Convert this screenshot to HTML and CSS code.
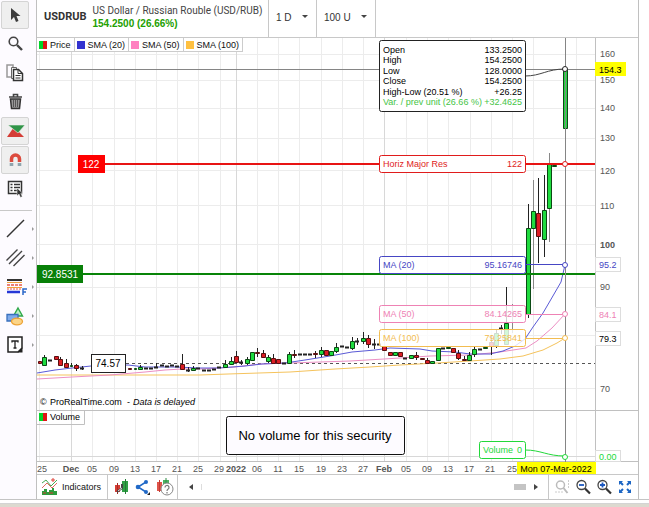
FILE: index.html
```html
<!DOCTYPE html>
<html lang="en">
<head>
    <meta charset="UTF-8">
    <meta name="viewport" content="width=device-width, initial-scale=1.0">
    <title>USDRUB - ProRealTime</title>
    <link rel="stylesheet" href="styles.css">
</head>
<body>
    <div class="app">
        <nav class="tools" aria-label="Drawing tools">
            <button class="tool active" type="button" aria-label="Select">
                <svg width="20" height="20" viewBox="0 0 20 20"><path d="M6 3v12l3-3 2 5 2.500-1-2-5h4z" fill="#3c3c3c"/></svg>
            </button>
            <button class="tool" type="button" aria-label="Zoom">
                <svg width="20" height="20" viewBox="0 0 20 20"><circle cx="8.500" cy="7.500" r="4.300" fill="none" stroke="#444" stroke-width="1.600"/><path d="M12 11l5 5" stroke="#444" stroke-width="2.400"/></svg>
            </button>
            <button class="tool" type="button" aria-label="Copy">
                <svg width="20" height="20" viewBox="0 0 20 20"><path d="M8 4V2H2v12h4" fill="none" stroke="#999" stroke-width="1.500"/><path d="M6.500 4.500h5v11h-5z" fill="#fff" stroke="#666"/><path d="M8.500 6.500h5l4 4v7h-9z" fill="#fff" stroke="#333" stroke-width="1.500"/><path d="M13 6.500v4h4M10.500 12.500h5M10.500 15h5" fill="none" stroke="#333"/></svg>
            </button>
            <button class="tool" type="button" aria-label="Delete">
                <svg width="20" height="20" viewBox="0 0 20 20"><path d="M4 5h13M8.500 4.500v-2h4v2" fill="none" stroke="#444" stroke-width="1.600"/><path d="M5.500 7h10l-1 9.500h-8z" fill="#999" stroke="#333" stroke-width="1.500"/><path d="M8.500 8v7M10.500 8v7M12.500 8v7" stroke="#555"/></svg>
            </button>
            <button class="tool active" type="button" aria-label="Buy and sell signals">
                <svg width="20" height="20" viewBox="0 0 20 20"><path d="M2 16h17L9 6z" fill="#d43d36"/><path d="M3 4h17l-7 8z" fill="#2f9447" stroke="#efefef" stroke-width=".6"/></svg>
            </button>
            <button class="tool active" type="button" aria-label="Magnet">
                <svg width="20" height="20" viewBox="0 0 20 20"><path d="M6.500 12V9a4 4 0 0 1 8 0v3" fill="none" stroke="#dc4b3e" stroke-width="3.500"/><path d="M4.700 13h3.600v3H4.700zM12.700 13h3.600v3h-3.600z" fill="#8fa4ad"/></svg>
            </button>
            <button class="tool" type="button" aria-label="Object list">
                <svg width="20" height="20" viewBox="0 0 20 20"><path d="M3.500 2.500h13v12h-13z" fill="#fff" stroke="#333" stroke-width="1.500"/><path d="M5.500 5.500h2M9 5.500h6M5.500 8.500h2M9 8.500h6M5.500 11.500h2M9 11.500h4" stroke="#333" stroke-width="1.500"/><path d="M12 9v8l2-2 1.500 3.500 1.800-1-1.500-3H18z" fill="#333" stroke="#fff" stroke-width=".5"/></svg>
            </button>
            <hr class="tools-line">
            <button class="tool flyout" type="button" aria-label="Line">
                <svg width="20" height="20" viewBox="0 0 20 20"><path d="M2 18L19 1" stroke="#333" stroke-width="1.500"/></svg>
            </button>
            <button class="tool flyout" type="button" aria-label="Parallel lines">
                <svg width="20" height="20" viewBox="0 0 20 20"><path d="M1.500 12.500L12.500 1.500M4 16L17 3M8.500 18l11-11" stroke="#444" stroke-width="1.400"/></svg>
            </button>
            <button class="tool flyout" type="button" aria-label="Fibonacci">
                <svg width="20" height="20" viewBox="0 0 20 20"><path d="M2 3h15" stroke="#333" stroke-width="2"/><path d="M2 5.500h15M2 10.500h15" stroke="#f0a13b"/><path d="M2 8h15" stroke="#e8574c" stroke-width="1.500" stroke-dasharray="3 1"/><path d="M2 12h15" stroke="#e8574c" stroke-dasharray="2 1"/><path d="M2 15h13" stroke="#2637d6" stroke-width="2.500"/><path d="M18 18v-6h4M18 15h3" fill="none" stroke="#2b68c9" stroke-width="1.500"/></svg>
            </button>
            <button class="tool flyout" type="button" aria-label="Shapes">
                <svg width="20" height="20" viewBox="0 0 20 20"><path d="M13 2l4.500 8h-9z" fill="#b8efc2" stroke="#2fa84a" stroke-width="1.400"/><path d="M2 8.500h11v6.500H2z" fill="#7fabeb" stroke="#3970bd" stroke-width="1.300"/><ellipse cx="12" cy="15.500" rx="5.500" ry="3.300" fill="#fbd488" stroke="#eda234" stroke-width="1.300"/></svg>
            </button>
            <button class="tool flyout" type="button" aria-label="Text">
                <svg width="20" height="20" viewBox="0 0 20 20"><path d="M3 2h14v11l-4 4H3z" fill="#fff" stroke="#222" stroke-width="1.500"/><path d="M17.500 12.500v5h-5z" fill="#222"/><path d="M7 7.500V6h6v1.500M10 6v7M8.500 13h3" fill="none" stroke="#222" stroke-width="1.300"/></svg>
            </button>
        </nav>

        <main class="main">
            <header class="header">
                <div class="security">
                    <h1 class="ticker">USDRUB</h1>
                    <div>
                        <div class="name">US Dollar / Russian Rouble (USD/RUB)</div>
                        <div class="quote">154.2500 (26.66%)</div>
                    </div>
                </div>
                <div class="picker">
                    <select class="timeframe" aria-label="Timeframe"><option>1 D</option></select>
                </div>
                <div class="picker">
                    <select class="units" aria-label="Units displayed"><option>100 U</option></select>
                </div>
            </header>

            <section class="chart">
                <ul class="legend">
                    <li><i class="swatch price"></i>Price</li>
                    <li><i class="swatch sma20"></i>SMA (20)</li>
                    <li><i class="swatch sma50"></i>SMA (50)</li>
                    <li><i class="swatch sma100"></i>SMA (100)</li>
                </ul>

                <svg class="plot" viewBox="37 38 601 436" role="img" aria-label="USDRUB daily price chart">
                    <!-- grid -->
                    <path class="grid" d="M39.500 38v424M92.500 38v424M114.500 38v424M135.500 38v424M156.500 38v424M177.500 38v424M198.500 38v424M220.500 38v424M257.500 38v424M278.500 38v424M299.500 38v424M321.500 38v424M342.500 38v424M363.500 38v424M406.500 38v424M427.500 38v424M448.500 38v424M470.500 38v424M491.500 38v424M512.500 38v424M533.500 38v424M576.500 38v424"/>
                    <path class="grid" d="M37 54.500h558M37 80.500h558M37 108.500h558M37 138.500h558M37 170.500h558M37 205.500h558M37 244.500h558M37 287.500h558M37 335.500h558M37 388.500h558"/>
                    <path class="grid-month" d="M71.500 38v424M236.500 38v424M384.500 38v424M37 456.500h558"/>
                    <path class="frame" d="M37 410.500h601M37 461.500h601M595.500 38v424"/>

                    <!-- levels -->
                    <path class="cross" d="M37 69.500h558"/>
                    <path class="dash" d="M126 363.500h469"/>

                    <!-- averages -->
                    <polyline class="ma ma100" points="37,375 200,375 228,374 290,372 335,369 370,367 400,365 437,363 470,361 500,359 523,356 543,350 557,343 565,338"/>
                    <polyline class="ma ma50" points="37,379 72,377 110,375 145,372 165,370 182,369 200,369 235,367 260,364 320,362 350,361 384,359 400,358 430,356 470,355 500,352 526,348 537,341 552,328 565,314"/>
                    <polyline class="ma ma20" points="37,373 55,370 72,368 91,366 128,365 145,367 177,367 198,368 219,368 245,366 262,364 285,363 305,360 330,356 352,352 375,350 390,348 420,349 432,351 455,352 470,354 490,354 503,351 515,346 525,339 533,327 543,313 550,301 561,282 565,265"/>

                    <!-- candles -->
                    <path class="wick" d="M44.500 355v10M60.500 357v9M66.500 359v8M71.500 363v4M76.500 364v7M82.500 366v4M140.500 365v5M156.500 363v5M182.500 354v16M188.500 367v5M193.500 366v5M225.500 360v8M231.500 357v8M236.500 351v12M241.500 360v5M247.500 357v8M257.500 348v9M263.500 350v8M268.500 355v8M273.500 354v10M289.500 352v12M294.500 350v8M315.500 351v7M321.500 347v10M336.500 343v10M352.500 337v13M357.500 338v7M363.500 332v12M368.500 335v13M374.500 339v10M416.500 352v8M427.500 358v6M458.500 350v10M464.500 356v5M469.500 352v9M474.500 347v10M491.500 335v20M496.500 330v18M501.500 325v9M506.500 287v47M528.500 204v114M538.500 178v85M544.500 175v82"/>
                    <path class="wick soft" d="M512.500 304v29M533.500 180v109M549.500 153v89M565.500 128v16"/>
                    <path class="doji" d="M48 360.500h4M80 368.500h4M144 368.500h4M149 368.500h4M154 367.500h4M160 365.500h4M165 366.500h4M170 365.500h4M175 366.500h4M186 370.500h4M196 368.500h4M202 370.500h4M207 370.500h4M212 369.500h4M217 367.500h4M239 362.500h4M282 363.500h4M298 354.500h4M303 354.500h4M308 354.500h4M340 346.500h4M345 347.500h4M355 341.500h4M372 344.500h4M377 344.500h4M403 358.500h4M441 348.500h4M478 349.500h4M499 328.500h4"/>
                    <path class="up" d="M42.500 357.500h4v8h-4zM70.500 365.500h2v1h-2zM134.500 368.500h2v1h-2zM138.500 367.500h4v2h-4zM191.500 368.500h4v2h-4zM223.500 364.500h4v3h-4zM229.500 361.500h4v3h-4zM245.500 359.500h4v4h-4zM250.500 352.500h4v8h-4zM266.500 357.500h4v4h-4zM287.500 354.500h4v9h-4zM319.500 350.500h4v4h-4zM329.500 351.500h4v4h-4zM334.500 347.500h4v4h-4zM350.500 341.500h4v7h-4zM361.500 338.500h4v3h-4zM393.500 352.500h4v3h-4zM409.500 355.500h4v3h-4zM430.500 361.500h4v2h-4zM436.500 348.500h4v12h-4zM446.500 347.500h4v1h-4zM467.500 355.500h4v5h-4zM472.500 349.500h4v5h-4zM483.500 347.500h4v1h-4zM494.500 333.500h4v12h-4zM504.500 323.500h4v21h-4zM526.500 228.500h4v86h-4zM531.500 211.500h4v17h-4zM542.500 210.500h4v29h-4zM547.500 164.500h4v44h-4zM552.500 165.500h4v1h-4zM563.500 69.500h4v59h-4z"/>
                    <path class="down" d="M38.500 361.500h3v2h-3zM54.500 356.500h4v3h-4zM58.500 359.500h4v6h-4zM64.500 363.500h4v4h-4zM74.500 365.500h4v3h-4zM128.500 368.500h3v1h-3zM180.500 364.500h4v5h-4zM234.500 356.500h4v6h-4zM255.500 352.500h4v1h-4zM261.500 353.500h4v4h-4zM271.500 358.500h4v5h-4zM276.500 359.500h4v4h-4zM292.500 354.500h4v1h-4zM313.500 353.500h4v1h-4zM324.500 350.500h4v5h-4zM366.500 338.500h4v6h-4zM382.500 346.500h4v4h-4zM388.500 352.500h4v3h-4zM398.500 352.500h4v4h-4zM414.500 355.500h4v2h-4zM420.500 358.500h4v1h-4zM425.500 360.500h4v3h-4zM451.500 348.500h4v4h-4zM456.500 353.500h4v5h-4zM462.500 359.500h4v1h-4zM489.500 342.500h4v4h-4zM536.500 213.500h4v23h-4z"/>

                    <!-- horizontal lines with their tags -->
                    <path class="resistance" d="M104 164h491"/>
                    <path class="support" d="M83 274h512"/>
                    <rect class="tag-red" x="78" y="155" width="27" height="18"/>
                    <text class="tag-text white" x="91" y="168" text-anchor="middle">122</text>
                    <rect class="tag-green" x="37" y="265" width="46" height="18"/>
                    <text class="tag-text white" x="60" y="278" text-anchor="middle">92.8531</text>
                    <rect class="tag-plain" x="91.500" y="354.500" width="34" height="18"/>
                    <text class="tag-text" x="108" y="367" text-anchor="middle">74.57</text>

                    <!-- cursor and value boxes -->
                    <path class="cross" d="M565.500 38v424"/>
                    <path class="link" d="M525 76c16 0 22-7 40-7"/>
                    <path class="link blue" d="M525 264.500h40"/>
                    <path class="link pink" d="M525 314.500h40"/>
                    <path class="link orange" d="M525 338.500h40"/>
                    <path class="link green" d="M525 450c16 0 22 6 40 6"/>
                    <circle class="dot" cx="565" cy="69" r="2.500"/>
                    <circle class="dot red" cx="565" cy="164" r="2.500"/>
                    <circle class="dot blue" cx="565" cy="265" r="2.500"/>
                    <circle class="dot pink" cx="565" cy="314" r="2.500"/>
                    <circle class="dot orange" cx="565" cy="338" r="2.500"/>
                    <circle class="dot green" cx="565" cy="457" r="2.500"/>

                    <rect class="box" x="379.500" y="40.500" width="146" height="71" rx="2"/>
                    <g class="values">
                        <text x="383" y="53">Open</text><text x="522" y="53" text-anchor="end">133.2500</text>
                        <text x="383" y="63">High</text><text x="522" y="63" text-anchor="end">154.2500</text>
                        <text x="383" y="74">Low</text><text x="522" y="74" text-anchor="end">128.0000</text>
                        <text x="383" y="84">Close</text><text x="522" y="84" text-anchor="end">154.2500</text>
                        <text x="383" y="95">High-Low (20.51 %)</text><text x="522" y="95" text-anchor="end">+26.25</text>
                        <text class="gain" x="383" y="105">Var. / prev unit (26.66 %)</text><text class="gain" x="522" y="105" text-anchor="end">+32.4625</text>
                    </g>
                    <g class="red">
                        <rect class="box" x="379.500" y="155.500" width="146" height="17" rx="2"/>
                        <text x="383" y="167">Horiz Major Res</text><text x="522" y="167" text-anchor="end">122</text>
                    </g>
                    <g class="blue">
                        <rect class="box clear" x="379.500" y="256.500" width="146" height="17" rx="2"/>
                        <text x="383" y="268">MA (20)</text><text x="522" y="268" text-anchor="end">95.16746</text>
                    </g>
                    <g class="pink">
                        <rect class="box clear" x="379.500" y="305.500" width="146" height="17" rx="2"/>
                        <text x="383" y="317">MA (50)</text><text x="522" y="317" text-anchor="end">84.14265</text>
                    </g>
                    <g class="orange">
                        <rect class="box clear" x="379.500" y="329.500" width="146" height="17" rx="2"/>
                        <text x="383" y="341">MA (100)</text><text x="522" y="341" text-anchor="end">79.25841</text>
                    </g>
                    <g class="green">
                        <rect class="box" x="479.500" y="441.500" width="46" height="17" rx="2"/>
                        <text x="483" y="453">Volume</text><text x="522" y="453" text-anchor="end">0</text>
                    </g>

                    <!-- price axis -->
                    <g class="axis">
                        <text x="600" y="57">160</text>
                        <text x="600" y="83">150</text>
                        <text x="600" y="111">140</text>
                        <text x="600" y="141">130</text>
                        <text x="600" y="174">120</text>
                        <text x="600" y="209">110</text>
                        <text class="bold" x="600" y="248">100</text>
                        <text x="600" y="290">90</text>
                        <text x="600" y="392">70</text>
                    </g>
                    <rect class="now" x="595" y="62" width="31" height="14"/>
                    <text x="599" y="73">154.3</text>
                    <rect class="last" x="595.500" y="257.500" width="25" height="14"/>
                    <text class="blue" x="599" y="268">95.2</text>
                    <rect class="last" x="595.500" y="307.500" width="25" height="14"/>
                    <text class="pink" x="599" y="318">84.1</text>
                    <rect class="last" x="595.500" y="331.500" width="25" height="14"/>
                    <text x="599" y="342">79.3</text>
                    <rect class="last" x="595.500" y="450.500" width="25" height="11"/>
                    <text class="green" x="599" y="460">0.00</text>

                    <!-- date axis -->
                    <g class="axis dates">
                        <text x="42" y="472">25</text>
                        <text class="bold" x="71" y="472">Dec</text>
                        <text x="92" y="472">05</text>
                        <text x="114" y="472">09</text>
                        <text x="135" y="472">13</text>
                        <text x="156" y="472">17</text>
                        <text x="177" y="472">21</text>
                        <text x="198" y="472">25</text>
                        <text x="219" y="472">29</text>
                        <text class="bold" x="236" y="472">2022</text>
                        <text x="257" y="472">06</text>
                        <text x="278" y="472">11</text>
                        <text x="299" y="472">15</text>
                        <text x="321" y="472">19</text>
                        <text x="342" y="472">23</text>
                        <text x="363" y="472">27</text>
                        <text class="bold" x="384" y="472">Feb</text>
                        <text x="406" y="472">05</text>
                        <text x="427" y="472">09</text>
                        <text x="448" y="472">13</text>
                        <text x="469" y="472">17</text>
                        <text x="490" y="472">21</text>
                        <text x="512" y="472">25</text>
                    </g>
                    <rect class="now" x="517" y="462" width="79" height="12"/>
                    <text x="556" y="472" text-anchor="middle">Mon 07-Mar-2022</text>

                    <!-- credit, volume panel -->
                    <text x="40" y="405">© <tspan x="50">ProRealTime.com</tspan> <tspan x="127">-</tspan> <tspan class="delayed" x="133">Data is delayed</tspan></text>
                    <path class="frame" d="M37 424.500h47.500v-14"/>
                    <rect x="39" y="413" width="4" height="8" fill="#00d52a"/>
                    <rect x="43" y="413" width="4" height="8" fill="#e01515"/>
                    <text x="50" y="420">Volume</text>
                    <rect class="notice" x="226.500" y="416.500" width="178" height="38" rx="2"/>
                    <text class="notice-text" x="315" y="440" text-anchor="middle">No volume for this security</text>
                </svg>
            </section>

            <footer class="toolbar">
                <button class="indicators" type="button">
                    <svg width="18" height="18" viewBox="0 0 18 18"><path d="M1 5l4-3 5 6 6-6" fill="none" stroke="#45a852"/><path d="M1 10l5-5 5 5 5-5" fill="none" stroke="#e0695f"/><path d="M10 2h4M12 0v4" stroke="#df4339"/><path d="M1 17v-4h2v-2h3v3h2v-2h3v-2h2v3h3v4z" fill="#2d9b3c"/><path d="M2 15h3M8 15h4" stroke="#d43a31"/></svg>
                    Indicators
                </button>
                <div class="group">
                    <button type="button" aria-label="Chart settings">
                        <svg width="16" height="18" viewBox="0 0 16 18"><path d="M1 7h5v7H1z" fill="#d63c34"/><path d="M3.500 5v11" stroke="#a32a24"/><path d="M8 3h6v11H8z" fill="#2fa045"/><path d="M11.500 1v15" stroke="#237c34"/><path d="M3 14l5-4V6" fill="none" stroke="#444" stroke-width="2"/><path d="M4 13l4-3" stroke="#ddd"/></svg>
                    </button>
                    <button type="button" aria-label="Share">
                        <svg width="16" height="18" viewBox="0 0 16 18"><path d="M11 4L3 9l8 5" fill="none" stroke="#2169c7" stroke-width="1.500"/><circle cx="11" cy="4" r="2" fill="#2169c7"/><circle cx="3" cy="9" r="2.300" fill="#2169c7"/><circle cx="11" cy="14" r="2" fill="#2169c7"/><path d="M15 14v3h-3z" fill="#222"/></svg>
                    </button>
                    <button type="button" aria-label="Help">
                        <svg width="18" height="18" viewBox="0 0 18 18"><path d="M1 4h5v9H1z" fill="#e0544a"/><path d="M3.500 2v12" stroke="#c23b33"/><path d="M7 2h6v6H7z" fill="#4bb262"/><path d="M10 0v7" stroke="#2d8c43"/><circle cx="11" cy="11" r="6" fill="#fff" stroke="#888"/><path d="M9 9.500a2 2 0 1 1 3 1.700q-1 .6-1 1.800M11 14v1.500" fill="none" stroke="#777" stroke-width="1.200"/></svg>
                    </button>
                </div>
                <div class="scroll">
                    <button type="button" aria-label="Scroll left"><svg width="6" height="8" viewBox="0 0 6 8"><path d="M5 1v6L1 4z" fill="#444"/></svg></button>
                    <span class="scroll-track"><span class="scroll-thumb"></span></span>
                    <button type="button" aria-label="Scroll right"><svg width="6" height="8" viewBox="0 0 6 8"><path d="M1 1v6l4-3z" fill="#444"/></svg></button>
                </div>
                <div class="group zoom">
                    <button type="button" aria-label="Zoom on area" disabled>
                        <svg width="16" height="16" viewBox="0 0 16 16"><circle cx="6.500" cy="6" r="4" fill="none" stroke="#bbb" stroke-width="1.500"/><path d="M9.500 9l4 5" stroke="#bbb" stroke-width="2"/><path d="M1 13h8M14.500 1v9" stroke="#ccc" stroke-dasharray="2 1"/></svg>
                    </button>
                    <button type="button" aria-label="Zoom out">
                        <svg width="16" height="16" viewBox="0 0 16 16"><circle cx="6.500" cy="6" r="4.500" fill="#fff" stroke="#444" stroke-width="1.300"/><path d="M10 9.500l5 5" stroke="#333" stroke-width="2.200"/><path d="M4 6h5" stroke="#1c58c0" stroke-width="1.800"/></svg>
                    </button>
                    <button type="button" aria-label="Zoom in">
                        <svg width="16" height="16" viewBox="0 0 16 16"><circle cx="6.500" cy="6" r="4.500" fill="#fff" stroke="#444" stroke-width="1.300"/><path d="M10 9.500l5 5" stroke="#333" stroke-width="2.200"/><path d="M4 6h5M6.500 3.500v5" stroke="#1c58c0" stroke-width="1.800"/></svg>
                    </button>
                    <button type="button" aria-label="Full screen">
                        <svg width="16" height="16" viewBox="0 0 16 16"><path d="M3 3l3 3M13 3l-3 3M3 13l3-3M13 13l-3-3" stroke="#1d66c4" stroke-width="2"/><path d="M2 6V2h4zM10 2h4v4zM2 10v4h4zM14 10v4h-4z" fill="#1d66c4"/></svg>
                    </button>
                </div>
            </footer>
        </main>
    </div>
    <div class="bottom-strip"></div>
</body>
</html>
```
FILE: styles.css
```css
body {
    margin: 0;
    background: #fff;
    color: #111;
    font-family: "Liberation Sans", Arial, sans-serif;
    font-size: 9px;
}

button, select {
    margin: 0;
    padding: 0;
    border: none;
    background: none;
    color: inherit;
    font: inherit;
}

svg {
    display: block;
}

.app {
    display: flex;
    border-bottom: 1px solid #c4c4c4;
}

/* left tool column */
.tools {
    display: flex;
    flex-direction: column;
    gap: 1px;
    width: 36px;
    padding-top: 1px;
    background: #fdfbff;
    border-right: 1px solid #c0c0c0;
}

.tool {
    display: flex;
    align-items: center;
    justify-content: center;
    width: 28px;
    height: 28px;
    margin-left: 1px;
    box-sizing: border-box;
    border: 1px solid transparent;
    border-radius: 2px;
}

.tool svg {
    overflow: visible;
}

.tool.active {
    background: #efefef;
    border-color: #d4d4d4;
}

.tool.flyout {
    position: relative;
}

.tool.flyout::after {
    content: "";
    position: absolute;
    left: 30px;
    top: 11px;
    border: 2px solid transparent;
    border-left-color: #999;
}

.tools-line {
    width: 32px;
    margin: 6px 0 3px;
    border: none;
    border-top: 1px solid #c8c8c8;
}

/* main column */
.main {
    flex: 1;
    min-width: 0;
    margin-right: 10px;
    border-right: 1px solid #c0c0c0;
}

.header {
    display: flex;
    height: 37px;
    border-bottom: 1px solid #c8c8c8;
}

.security {
    display: flex;
    align-items: center;
    gap: 6px;
    width: 231px;
    padding: 0 0 4px 7px;
    box-sizing: border-box;
    white-space: nowrap;
}

.ticker {
    margin: 0;
    font-family: Roboto, sans-serif;
    font-size: 11px;
    color: #333;
}

.name {
    font-family: Roboto, sans-serif;
    font-size: 10px;
    line-height: 13px;
    color: #444;
}

.quote {
    font-size: 10px;
    font-weight: bold;
    line-height: 13px;
    color: #22a000;
}

.picker {
    display: flex;
    position: relative;
    border-left: 1px solid #c8c8c8;
}

.picker:last-child {
    border-right: 1px solid #c8c8c8;
}

.picker::after {
    content: "";
    position: absolute;
    right: 8px;
    top: 15px;
    border: 3px solid transparent;
    border-top-color: #444;
    border-bottom: none;
    pointer-events: none;
}

.picker select {
    appearance: none;
    padding: 0 7px 3px;
    font-size: 10px;
    color: #333;
}

.timeframe {
    width: 47px;
}

.units {
    width: 58px;
}

.chart {
    position: relative;
}

.legend {
    position: absolute;
    left: 0;
    top: 0;
    display: flex;
    margin: 0;
    padding: 0;
    list-style: none;
    background: #fff;
}

.legend li {
    display: flex;
    align-items: center;
    gap: 3px;
    height: 13px;
    padding: 0 3px 0 2px;
    border-right: 1px solid #ccc;
    border-bottom: 1px solid #ccc;
}

.swatch {
    width: 8px;
    height: 8px;
}

.swatch.price {
    background: linear-gradient(90deg, #00d52a 50%, #e01515 50%);
}

.swatch.sma20 {
    background: #3333d0;
}

.swatch.sma50 {
    background: #ff80c0;
}

.swatch.sma100 {
    background: #ffc040;
}

/* plot */
.plot {
    width: 100%;
    height: auto;
    font-size: 9px;
}

.plot path, .plot polyline {
    fill: none;
}

.plot .grid {
    stroke: #ececec;
}

.plot .grid-month {
    stroke: #d8d8d8;
}

.plot .frame {
    stroke: #c0c0c0;
}

.plot .cross {
    stroke: #858585;
}

.plot .dash {
    stroke: #555;
    stroke-dasharray: 3 3;
}

.plot .ma100 {
    stroke: #f5c35c;
}

.plot .ma50 {
    stroke: #ec8fc4;
}

.plot .ma20 {
    stroke: #5a5ad6;
}

.plot .wick, .plot .doji {
    stroke: #222;
}

.plot .wick.soft {
    stroke: #888;
}

.plot .doji {
    stroke-width: 2;
}

.plot .up {
    fill: #1fdc3f;
    stroke: #0b4a14;
}

.plot .down {
    fill: #dc1c24;
    stroke: #5a1010;
}

.plot .resistance {
    stroke: #e81414;
    stroke-width: 2;
}

.plot .support {
    stroke: #088408;
    stroke-width: 2;
}

.tag-red {
    fill: #f00;
}

.tag-green {
    fill: #088008;
}

.tag-plain {
    fill: #fff;
    stroke: #222;
}

.tag-text {
    font-size: 10px;
}

.white {
    fill: #fff;
}

.box {
    fill: #fff;
    stroke: #222;
}

.box.clear {
    fill-opacity: 0.8;
}

.plot .link {
    stroke: #444;
}

.dot {
    fill: #fff;
    stroke: #222;
    stroke-width: 1;
}

.gain {
    fill: #45c445;
}

.red text {
    fill: #e01c1c;
}

.red .box, .dot.red {
    stroke: #e01c1c;
}

.blue text, text.blue {
    fill: #4646c4;
}

.blue .box, .dot.blue, .plot .link.blue {
    stroke: #4646c4;
}

.pink text, text.pink {
    fill: #ee82b4;
}

.pink .box, .dot.pink, .plot .link.pink {
    stroke: #ee82b4;
}

.orange text {
    fill: #f2bc50;
}

.orange .box, .dot.orange, .plot .link.orange {
    stroke: #f2bc50;
}

.green text, text.green {
    fill: #22d83a;
}

.green .box, .dot.green, .plot .link.green {
    stroke: #22d83a;
}

.axis text {
    fill: #555;
}

.dates text {
    text-anchor: middle;
}

.bold {
    font-weight: bold;
}

.now {
    fill: #ff0;
}

.last {
    fill: #fff;
    stroke: #ddd;
}

.delayed {
    font-style: italic;
}

.notice {
    fill: #fdfbff;
    stroke: #111;
}

.notice-text {
    font-size: 13px;
}

/* bottom toolbar */
.toolbar {
    display: flex;
    height: 24px;
    border-top: 1px solid #c8c8c8;
}

.indicators {
    display: flex;
    align-items: center;
    gap: 3px;
    width: 70px;
    padding-left: 4px;
    box-sizing: border-box;
}

.group {
    display: flex;
    align-items: center;
    gap: 5px;
    padding: 0 3px 0 6px;
    border-left: 1px solid #c8c8c8;
}

.group.zoom {
    padding: 0 5px;
}

.scroll {
    display: flex;
    flex: 1;
    align-items: center;
    gap: 7px;
    padding: 0 9px 0 10px;
    border-left: 1px solid #c8c8c8;
}

.scroll-track {
    display: flex;
    flex: 1;
    justify-content: flex-end;
    border-left: 1px solid #ddd;
}

.scroll-thumb {
    width: 12px;
    height: 6px;
    background: #c4c4c4;
}

.bottom-strip {
    height: 3px;
    margin-top: 3px;
    border-top: 1px solid #d4d4d4;
    background: #dcdad0;
}
```
